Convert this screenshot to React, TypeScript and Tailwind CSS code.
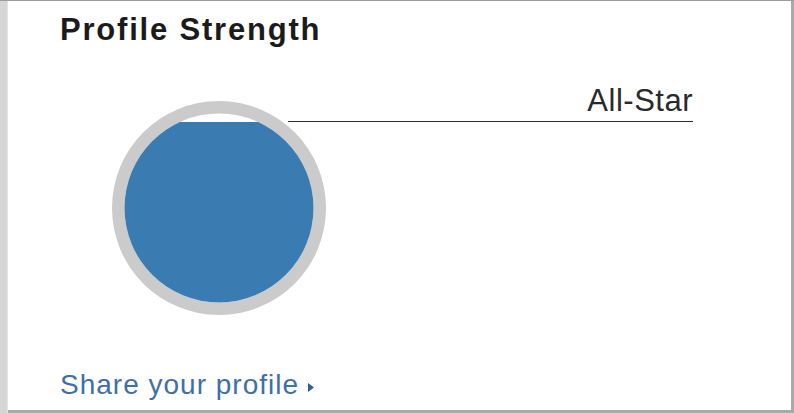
import React from 'react';

const strength = 0.955; // fill level of the gauge, 0..1

function StrengthGauge() {
  const size = 216;
  const c = size / 2;
  const inner = 94.5;
  const clipTop = c - inner + (1 - strength) * inner * 2;

  return (
    <svg width={size} height={size} viewBox={`0 0 ${size} ${size}`} className="block flex-none">
      <defs>
        <clipPath id="gauge-fill">
          <rect x="0" y={clipTop} width={size} height={size} />
        </clipPath>
      </defs>
      <circle cx={c} cy={c} r={107} fill="#cbcbcb" />
      <circle cx={c} cy={c} r={inner} fill="#ffffff" />
      <circle cx={c} cy={c} r={inner} fill="#3a7cb2" clipPath="url(#gauge-fill)" />
    </svg>
  );
}

export default function App() {
  return (
    <div className="w-[794px] h-[413px] flex bg-[#d6d6d6] border-t border-[#9c9c9c] overflow-hidden">
      {/* left gutter strip */}
      <div className="w-[8px] flex-none border-r border-[#e4e4e4]" />

      {/* card */}
      <div
        className="flex-1 bg-white border-r-[3px] border-b-[3px] border-[#a9a9a9] pl-[52px] pt-[11px]"
        style={{ fontFamily: '"Liberation Sans", Arial, Helvetica, sans-serif' }}
      >
        <h2 className="text-[31px] leading-[36px] font-bold tracking-[1.8px] text-[#1b1b1b]">
          Profile Strength
        </h2>

        <div className="flex items-start mt-[35px]">
          <div className="ml-[51px] mt-[17px]">
            <StrengthGauge />
          </div>
          <div className="ml-[-39px] w-[405px] border-b-[1.5px] border-[#2e2e2e] pb-[2px] text-right">
            <span className="text-[31px] leading-[36px] tracking-[0.5px] text-[#2a2a2a]">All-Star</span>
          </div>
        </div>

        <a href="#" className="mt-[53px] flex items-center text-[28px] leading-[32px] tracking-[1px] text-[#3f6fa8]">
          Share your profile
          <svg width="6" height="9" viewBox="0 0 6 9" className="ml-[9px] mt-[5px]">
            <path d="M0 0 L6 4.5 L0 9 Z" fill="#2f5f98" />
          </svg>
        </a>
      </div>
    </div>
  );
}
